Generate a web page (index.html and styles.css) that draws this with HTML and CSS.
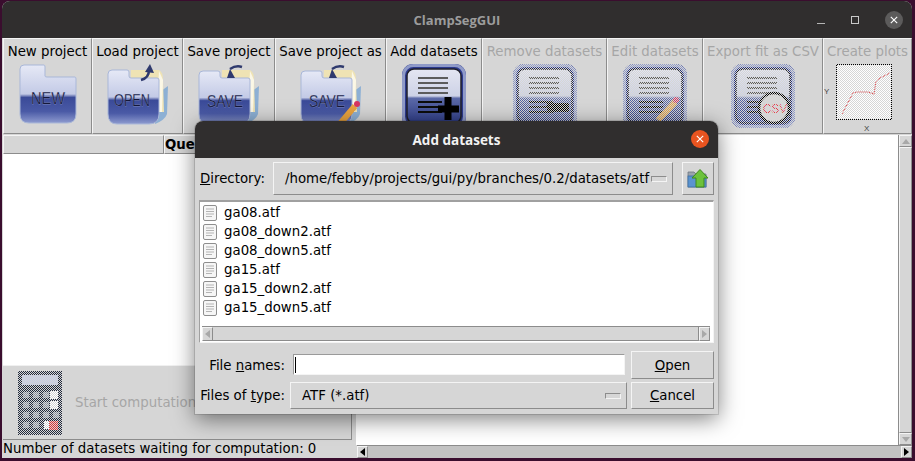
FILE: index.html
```html
<!DOCTYPE html>
<html lang="en">
<head>
<meta charset="utf-8">
<title>ClampSegGUI</title>
<link rel="stylesheet" href="styles.css">
</head>
<body>
<svg class="defs" aria-hidden="true">
  <defs>
    <linearGradient id="gloss" x1="0" y1="0" x2="0" y2="1">
      <stop offset="0" stop-color="#e6e9f6"/>
      <stop offset=".5" stop-color="#c3cae6"/>
      <stop offset=".56" stop-color="#3a4a98"/>
      <stop offset=".8" stop-color="#4a5aa6"/>
      <stop offset="1" stop-color="#8e9bcf"/>
    </linearGradient>
    <linearGradient id="tile" x1="0" y1="0" x2="0" y2="1">
      <stop offset="0" stop-color="#e4e6f2"/>
      <stop offset=".5" stop-color="#cdd2e6"/>
      <stop offset=".54" stop-color="#5c6aa8"/>
      <stop offset="1" stop-color="#2f3d88"/>
    </linearGradient>
    <pattern id="dither" width="2" height="2" patternUnits="userSpaceOnUse">
      <rect x="0" y="0" width="1" height="1" fill="#d6d6d6" shape-rendering="crispEdges"/>
      <rect x="1" y="1" width="1" height="1" fill="#d6d6d6" shape-rendering="crispEdges"/>
    </pattern>
    <symbol id="paper" viewBox="0 0 62 62">
      <path d="M50 30 L61 22 L60 50 Q58 56 48 60Z" fill="#8db0d4"/>
      <path d="M24 6 H52 Q56 8 56 16 L57 48 H24Z" fill="#efe3b4"/>
      <path d="M52 7 L56 16 L55 48 L50 48Z" fill="#fbf7e6"/>
    </symbol>
    <symbol id="sheet" viewBox="0 0 64 64">
      <rect x="0" y="0" width="64" height="64" rx="11" fill="#2c3a8e"/>
      <rect x="1.500" y="1.500" width="61" height="61" rx="10" fill="none" stroke="#8f9ac8" stroke-width="3"/>
      <rect x="5" y="5" width="54" height="54" rx="7" fill="url(#tile)" stroke="#1f1f2a" stroke-width="1.500"/>
      <path d="M16 14H46M16 19H46M16 24H46M16 29H46" stroke="#5c5c5c" stroke-width="2"/>
      <path d="M16 38H40M16 43H40M16 48H40" stroke="#0c0c0c" stroke-width="2"/>
    </symbol>
  </defs>
</svg>

<section class="window main-window">
  <header class="titlebar">
    <span></span>
    <span class="title-text">ClampSegGUI</span>
    <div class="win-controls">
      <svg class="win-ico" viewBox="0 0 10 10"><path d="M1 8.500H9" stroke="#b5b5b5" stroke-width="1"/></svg>
      <svg class="win-ico" viewBox="0 0 10 10"><rect x="1.500" y="1.500" width="7" height="7" fill="none" stroke="#c8c8c8"/></svg>
      <span class="win-close"><svg viewBox="0 0 10 10"><path d="M1 1L9 9M9 1L1 9" stroke="#fff" stroke-width="1.400"/></svg></span>
    </div>
  </header>

  <nav class="toolbar">
    <div class="tool"><span class="tool-label">New project</span>
      <svg class="icon" width="58" height="60" viewBox="0 0 58 60">
        <path d="M5 1H25Q26 1 26 3V12Q26 13 28 13H56Q57 13 57 15V50Q57 59 48 59H10Q1 59 1 50V5Q1 1 5 1Z" fill="url(#gloss)" stroke="#a9b7d8"/>
        <text x="29" y="40" class="ico-text" textLength="34" lengthAdjust="spacingAndGlyphs">NEW</text>
      </svg>
    </div>
    <div class="tool"><span class="tool-label">Load project</span>
      <svg class="icon" width="62" height="62" viewBox="0 0 62 62">
        <use href="#paper" width="62" height="62"/>
        <path d="M5 6H20Q22 6 22 8V12Q22 14 24 14H50Q52 14 52 16V50Q52 60 42 60H10Q1 60 1 50V10Q1 6 5 6Z" fill="url(#gloss)" stroke="#a9b7d8"/>
        <path d="M34 16Q42 14 42 6" fill="none" stroke="#2f3a6e" stroke-width="2.500"/>
        <path d="M38 8L43 0L47 9Z" fill="#2f3a6e"/>
        <text x="25" y="42" class="ico-text" textLength="36" lengthAdjust="spacingAndGlyphs">OPEN</text>
      </svg>
    </div>
    <div class="tool"><span class="tool-label">Save project</span>
      <svg class="icon" width="62" height="62" viewBox="0 0 62 62">
        <use href="#paper" width="62" height="62"/>
        <path d="M5 7H20Q22 7 22 9V12Q22 14 24 14H50Q52 14 52 16V50Q52 60 42 60H10Q1 60 1 50V11Q1 7 5 7Z" fill="url(#gloss)" stroke="#a9b7d8"/>
        <path d="M32 5Q38 1 44 3" fill="none" stroke="#2f3a6e" stroke-width="2.500"/>
        <path d="M29 14L37 14L32 5Z" fill="#2f3a6e"/>
        <text x="27" y="43" class="ico-text" textLength="36" lengthAdjust="spacingAndGlyphs">SAVE</text>
      </svg>
    </div>
    <div class="tool"><span class="tool-label">Save project as</span>
      <svg class="icon" width="62" height="62" viewBox="0 0 62 62">
        <use href="#paper" width="62" height="62"/>
        <path d="M5 7H20Q22 7 22 9V12Q22 14 24 14H50Q52 14 52 16V50Q52 60 42 60H10Q1 60 1 50V11Q1 7 5 7Z" fill="url(#gloss)" stroke="#a9b7d8"/>
        <path d="M32 5Q38 1 44 3" fill="none" stroke="#2f3a6e" stroke-width="2.500"/>
        <path d="M29 14L37 14L32 5Z" fill="#2f3a6e"/>
        <text x="27" y="43" class="ico-text" textLength="36" lengthAdjust="spacingAndGlyphs">SAVE</text>
        <path d="M39 61L55 42" stroke="#e9a33f" stroke-width="6"/>
        <circle cx="57" cy="40" r="3" fill="#d8345f"/>
      </svg>
    </div>
    <div class="tool"><span class="tool-label">Add datasets</span>
      <svg class="icon" width="64" height="64" viewBox="0 0 64 64">
        <use href="#sheet" width="64" height="64"/>
        <path d="M46 33V56M36 45H57" stroke="#000" stroke-width="7"/>
      </svg>
    </div>
    <div class="tool is-disabled"><span class="tool-label">Remove datasets</span>
      <svg class="icon" width="64" height="64" viewBox="0 0 64 64">
        <use href="#sheet" width="64" height="64"/>
        <rect x="34" y="39" width="22" height="9" fill="#000"/>
        <rect width="64" height="64" fill="url(#dither)"/>
      </svg>
    </div>
    <div class="tool is-disabled"><span class="tool-label">Edit datasets</span>
      <svg class="icon" width="64" height="64" viewBox="0 0 64 64">
        <use href="#sheet" width="64" height="64"/>
        <path d="M35 56L52 38" stroke="#e9a33f" stroke-width="6"/>
        <circle cx="53" cy="36" r="3" fill="#d8345f"/>
        <rect width="64" height="64" fill="url(#dither)"/>
      </svg>
    </div>
    <div class="tool is-disabled"><span class="tool-label">Export fit as CSV</span>
      <svg class="icon" width="64" height="64" viewBox="0 0 64 64">
        <use href="#sheet" width="64" height="64"/>
        <circle cx="43" cy="44" r="15" fill="#d6d6d6" stroke="#000" stroke-width="2.500"/>
        <text x="44" y="49" class="ico-csv">CSV</text>
        <rect width="64" height="64" fill="url(#dither)"/>
      </svg>
    </div>
    <div class="tool is-disabled"><span class="tool-label">Create plots</span>
      <svg class="icon plot-ico" width="72" height="68" viewBox="0 0 72 68">
        <rect x="12.500" y="0.500" width="55" height="55" fill="#fff" stroke="#000"/>
        <path d="M18 50L29 29L33 28H44L50 30L52 17L56 14L66 9" fill="none" stroke="#e8474c"/>
        <rect width="72" height="68" fill="url(#dither)"/>
        <text x="0" y="30" class="ico-axis">Y</text>
        <text x="40" y="67" class="ico-axis">X</text>
      </svg>
    </div>
  </nav>

  <main class="workspace">
    <section class="left-pane">
      <div class="queue-table">
        <div class="table-head">
          <div class="head-cell"></div>
          <div class="head-cell head-title">Queue</div>
        </div>
        <div class="table-body"></div>
      </div>
      <div class="start-panel">
        <svg class="calc" width="44" height="64" viewBox="0 0 44 64">
          <rect width="44" height="64" fill="#20283a"/>
          <rect x="4" y="4" width="36" height="10" fill="#c0c8e4"/>
          <g fill="#8a8f9c"><rect x="5" y="21" width="6" height="6"/><rect x="15" y="21" width="6" height="6"/><rect x="25" y="21" width="6" height="6"/><rect x="5" y="31" width="6" height="6"/><rect x="15" y="31" width="6" height="6"/><rect x="25" y="31" width="6" height="6"/><rect x="5" y="41" width="6" height="6"/><rect x="15" y="41" width="6" height="6"/><rect x="25" y="41" width="6" height="6"/><rect x="35" y="41" width="6" height="6"/><rect x="5" y="51" width="6" height="6"/><rect x="15" y="51" width="6" height="6"/></g>
          <g fill="#fff"><rect x="32" y="20" width="8" height="8"/><rect x="32" y="30" width="8" height="8"/><rect x="26" y="50" width="8" height="8"/></g>
          <rect x="31" y="50" width="9" height="9" fill="#e03030"/>
          <rect width="44" height="64" fill="url(#dither)"/>
        </svg>
        <span class="start-label">Start computation</span>
      </div>
      <div class="status">Number of datasets waiting for computation: 0</div>
    </section>
    <section class="right-pane">
      <div class="right-top">
        <div class="canvas"></div>
        <div class="vbar">
          <span class="sb-btn"><i class="tri tri-up"></i></span>
          <span class="vbar-track"></span>
          <span class="sb-btn sb-btn-end"><i class="tri tri-down"></i></span>
        </div>
      </div>
      <div class="hbar">
        <span class="sb-btn sb-h"><i class="tri tri-left tri-black"></i></span>
        <span class="hbar-track"></span>
        <span class="sb-btn sb-h"><i class="tri tri-right tri-black"></i></span>
      </div>
    </section>
  </main>
</section>

<section class="window dialog">
  <header class="dialog-title">
    <span class="dialog-title-text">Add datasets</span>
    <span class="dialog-close"><svg viewBox="0 0 10 10"><path d="M1 1L9 9M9 1L1 9" stroke="#fff" stroke-width="1.400"/></svg></span>
  </header>
  <div class="dialog-body">
    <div class="dir-row">
      <span class="dir-label"><u>D</u>irectory:</span>
      <div class="combo dir-combo"><span class="combo-text">/home/febby/projects/gui/py/branches/0.2/datasets/atf</span><i class="combo-ind"></i></div>
      <button class="bevel up-btn" type="button" aria-label="Parent directory">
        <svg width="22" height="20" viewBox="0 0 22 20">
          <path d="M1 3H7L9 5H19V18H1Z" fill="#9aa3ad" stroke="#6f7780" stroke-width=".8"/>
          <rect x="1" y="7" width="18" height="11" fill="#5b93cf" stroke="#3b6ea6" stroke-width=".8"/>
          <path d="M13 0.500L21 9H17V18H9V9H5Z" fill="#6cc23c" stroke="#3f8a1c"/>
        </svg>
      </button>
    </div>
    <div class="file-list">
      <ul class="files">
        <li class="file"><svg class="doc" width="14" height="16" viewBox="0 0 14 16"><rect x=".5" y=".5" width="13" height="15" rx="1.500" fill="#f6f6f6" stroke="#8e8e8e"/><path d="M3 4H11M3 6.500H11M3 9H11M3 11.500H9" stroke="#b4b4b4"/></svg>ga08.atf</li>
        <li class="file"><svg class="doc" width="14" height="16" viewBox="0 0 14 16"><rect x=".5" y=".5" width="13" height="15" rx="1.500" fill="#f6f6f6" stroke="#8e8e8e"/><path d="M3 4H11M3 6.500H11M3 9H11M3 11.500H9" stroke="#b4b4b4"/></svg>ga08_down2.atf</li>
        <li class="file"><svg class="doc" width="14" height="16" viewBox="0 0 14 16"><rect x=".5" y=".5" width="13" height="15" rx="1.500" fill="#f6f6f6" stroke="#8e8e8e"/><path d="M3 4H11M3 6.500H11M3 9H11M3 11.500H9" stroke="#b4b4b4"/></svg>ga08_down5.atf</li>
        <li class="file"><svg class="doc" width="14" height="16" viewBox="0 0 14 16"><rect x=".5" y=".5" width="13" height="15" rx="1.500" fill="#f6f6f6" stroke="#8e8e8e"/><path d="M3 4H11M3 6.500H11M3 9H11M3 11.500H9" stroke="#b4b4b4"/></svg>ga15.atf</li>
        <li class="file"><svg class="doc" width="14" height="16" viewBox="0 0 14 16"><rect x=".5" y=".5" width="13" height="15" rx="1.500" fill="#f6f6f6" stroke="#8e8e8e"/><path d="M3 4H11M3 6.500H11M3 9H11M3 11.500H9" stroke="#b4b4b4"/></svg>ga15_down2.atf</li>
        <li class="file"><svg class="doc" width="14" height="16" viewBox="0 0 14 16"><rect x=".5" y=".5" width="13" height="15" rx="1.500" fill="#f6f6f6" stroke="#8e8e8e"/><path d="M3 4H11M3 6.500H11M3 9H11M3 11.500H9" stroke="#b4b4b4"/></svg>ga15_down5.atf</li>
      </ul>
      <div class="list-hbar">
        <span class="sb-btn sb-h"><i class="tri tri-left"></i></span>
        <span class="list-track"></span>
        <span class="sb-btn sb-h"><i class="tri tri-right"></i></span>
      </div>
    </div>
    <div class="form-grid">
      <span class="form-label">File <u>n</u>ames:</span>
      <div class="name-input"><i class="caret"></i></div>
      <button class="bevel action" type="button"><u>O</u>pen</button>
      <span class="form-label">Files of <u>t</u>ype:</span>
      <div class="combo type-combo"><span class="combo-text">ATF (*.atf)</span><i class="combo-ind"></i></div>
      <button class="bevel action" type="button"><u>C</u>ancel</button>
    </div>
  </div>
</section>
</body>
</html>
```

FILE: styles.css
```css
* { box-sizing: border-box; }

html, body {
  margin: 0;
  width: 915px;
  height: 461px;
  overflow: hidden;
}

body {
  position: relative;
  background: #3a0d2e;
  font-family: "DejaVu Sans", sans-serif;
  font-size: 13.33px;
  color: #000;
}

.defs { position: absolute; width: 0; height: 0; }

.window { position: absolute; display: flex; flex-direction: column; }

.main-window {
  left: 2px;
  top: 1px;
  width: 910px;
  height: 457px;
  background: #d6d6d6;
  border-radius: 8px 8px 0 0;
  overflow: hidden;
}

.titlebar {
  flex: 0 0 37px;
  display: grid;
  grid-template-columns: 1fr auto 1fr;
  align-items: center;
  background: #302e2e;
}

.title-text {
  font-family: "Open Sans", sans-serif;
  font-weight: 700;
  font-size: 13px;
  color: #9c9c9c;
}

.win-controls {
  display: flex;
  justify-content: flex-end;
  align-items: center;
  gap: 24px;
  padding-right: 9px;
}

.win-ico { width: 10px; height: 10px; }

.win-close {
  display: flex;
  align-items: center;
  justify-content: center;
  width: 18px;
  height: 18px;
  margin-left: 1px;
  border-radius: 50%;
  background: #5c5b5b;
}
.win-close svg { width: 8px; height: 8px; }

.toolbar {
  flex: 0 0 96px;
  display: grid;
  grid-template-columns: 89px 91px 92px 111px 96px 125px 96px 120px 1fr;
  padding-left: 1px;
}

.tool {
  display: flex;
  flex-direction: column;
  align-items: center;
  padding-top: 4px;
  border: 1px solid;
  border-color: #f4f4f4 #8c8c8c #8c8c8c #f4f4f4;
  overflow: hidden;
}

.tool-label { line-height: 17px; white-space: nowrap; }
.icon { display: block; margin-top: 4px; flex: none; }
.plot-ico { margin-left: -16px; }
.is-disabled .tool-label { color: #a6a6a6; }

.ico-text {
  font-family: "Liberation Sans", sans-serif;
  font-size: 17px;
  fill: #14183a;
  stroke: #aeb6dc;
  stroke-width: .25px;
  text-anchor: middle;
}
.ico-csv {
  font-family: "Liberation Sans", sans-serif;
  font-size: 12px;
  fill: #e8303a;
  text-anchor: middle;
}
.ico-axis {
  font-family: "Liberation Sans", sans-serif;
  font-size: 8px;
  fill: #444;
}

.workspace { flex: 1; display: flex; min-height: 0; }

.left-pane {
  flex: 0 0 349px;
  display: flex;
  flex-direction: column;
  margin-left: 1px;
}

.queue-table { flex: 1; display: flex; flex-direction: column; background: #fff; }

.table-head { flex: 0 0 20px; display: flex; padding-top: 1px; background: #d6d6d6; }

.head-cell {
  flex: 0 0 161px;
  border: 1px solid;
  border-color: #f4f4f4 #8c8c8c #8c8c8c #f4f4f4;
  line-height: 17px;
}

.head-title { flex: 1; font-weight: 700; }

.table-body { flex: 1; }

.start-panel {
  flex: 0 0 75px;
  display: flex;
  align-items: center;
  gap: 13px;
  padding-left: 15px;
  border-top: 1px solid #f0f0f0;
  border-right: 1px solid #8c8c8c;
  border-bottom: 1px solid #8c8c8c;
}

.start-label { color: #a6a6a6; white-space: nowrap; }

.status { flex: 0 0 18px; line-height: 18px; white-space: nowrap; }

.right-pane {
  flex: 1;
  display: flex;
  flex-direction: column;
  margin-left: 4px;
  padding-top: 1px;
}

.right-top { flex: 1; display: flex; min-height: 0; }
.canvas { flex: 1; background: #fff; }

.vbar {
  flex: 0 0 14px;
  display: flex;
  flex-direction: column;
  background: #d6d6d6;
  border-left: 1px solid #8c8c8c;
}

.vbar-track {
  flex: 1;
  border: 1px solid;
  border-color: #f4f4f4 #8c8c8c #8c8c8c #f4f4f4;
}

.sb-btn {
  flex: 0 0 12px;
  display: flex;
  align-items: center;
  justify-content: center;
  background: #d6d6d6;
  border: 1px solid;
  border-color: #f4f4f4 #8c8c8c #8c8c8c #f4f4f4;
}
.sb-h { flex-basis: 11px; }

.tri { display: block; width: 0; height: 0; border: 4px solid transparent; }
.tri-up { border-top-width: 0; border-bottom: 5px solid #a8a8a8; }
.tri-down { border-bottom-width: 0; border-top: 5px solid #a8a8a8; }
.tri-left { border-left-width: 0; border-right: 5px solid #a8a8a8; }
.tri-right { border-right-width: 0; border-left: 5px solid #a8a8a8; }
.tri-left.tri-black { border-right-color: #000; }
.tri-right.tri-black { border-left-color: #000; }

.hbar {
  flex: 0 0 13px;
  display: flex;
  background: #c2c2c2;
  border-top: 1px solid #8c8c8c;
  margin-left: 1px;
}
.hbar-track { flex: 1; }

.dialog {
  left: 195px;
  top: 121px;
  width: 523px;
  height: 293px;
  background: #d6d6d6;
  border-radius: 8px 8px 0 0;
  box-shadow: 0 5px 22px rgba(0, 0, 0, .5), 0 0 0 1px rgba(0, 0, 0, .12);
}

.dialog-title {
  position: relative;
  flex: 0 0 37px;
  display: flex;
  align-items: center;
  justify-content: center;
  background: #302e2e;
  border-radius: 8px 8px 0 0;
}

.dialog-title-text {
  font-family: "Open Sans", sans-serif;
  font-weight: 700;
  font-size: 13.5px;
  color: #f2f2f2;
}

.dialog-close {
  position: absolute;
  right: 9px;
  top: 9px;
  display: flex;
  align-items: center;
  justify-content: center;
  width: 18px;
  height: 18px;
  border-radius: 50%;
  background: #e95420;
}
.dialog-close svg { width: 8px; height: 8px; }

.dialog-body {
  flex: 1;
  display: flex;
  flex-direction: column;
  padding: 4px 4px 0;
}

.dir-row { flex: 0 0 33px; display: flex; align-items: stretch; }

.dir-label {
  flex: 0 0 74px;
  align-self: center;
  padding-left: 1px;
}

.combo {
  display: flex;
  align-items: center;
  border: 1px solid;
  border-color: #f4f4f4 #8c8c8c #8c8c8c #f4f4f4;
}
.combo-text { flex: 1; white-space: nowrap; }
.combo-ind {
  flex: none;
  width: 16px;
  height: 6px;
  margin-right: 5px;
  border: 1px solid;
  border-color: #8c8c8c #f4f4f4 #f4f4f4 #8c8c8c;
}

.dir-combo { flex: 0 0 400px; padding-left: 11px; }
.type-combo { padding-left: 11px; }

.bevel {
  margin: 0;
  padding: 0;
  background: #d6d6d6;
  font: inherit;
  color: #000;
  border: 1px solid;
  border-color: #f4f4f4 #8c8c8c #8c8c8c #f4f4f4;
}

.up-btn {
  flex: 0 0 32px;
  margin-left: 9px;
  display: flex;
  align-items: center;
  justify-content: center;
}

.file-list {
  flex: 0 0 143px;
  display: flex;
  flex-direction: column;
  margin-top: 5px;
  padding: 0 2px 1px 2px;
  background: #fff;
  border-top: 2px solid #a0a0a0;
  border-left: 1px solid #a0a0a0;
  border-right: 1px solid #f4f4f4;
  border-bottom: 1px solid #f4f4f4;
}

.files { flex: 1; list-style: none; margin: 0; padding: 1px 0 0 1px; }

.file {
  display: flex;
  align-items: center;
  gap: 7px;
  height: 19px;
  white-space: nowrap;
}
.doc { flex: none; }

.list-hbar {
  flex: 0 0 15px;
  display: flex;
  background: #d6d6d6;
  border-top: 1px solid #8c8c8c;
  margin-right: 1px;
}

.list-track {
  flex: 1;
  border-bottom: 1px solid #8c8c8c;
  border-right: 1px solid #8c8c8c;
}

.form-grid {
  display: grid;
  grid-template-columns: 85px 337px 83px;
  grid-template-rows: 28px 27px;
  column-gap: 5px;
  row-gap: 3px;
  margin-top: 8px;
  padding-left: 1px;
}
.form-grid .bevel { margin-left: -1px; width: 83px; }
.form-label { align-self: center; text-align: right; white-space: nowrap; }

.name-input {
  display: flex;
  align-items: center;
  margin: 3px 2px 4px 3px;
  padding-left: 1px;
  background: #fff;
  border: 1px solid;
  border-color: #9a9a9a #f4f4f4 #f4f4f4 #9a9a9a;
}
.caret { display: block; width: 1px; height: 16px; background: #000; }

.action { text-align: center; }
```
